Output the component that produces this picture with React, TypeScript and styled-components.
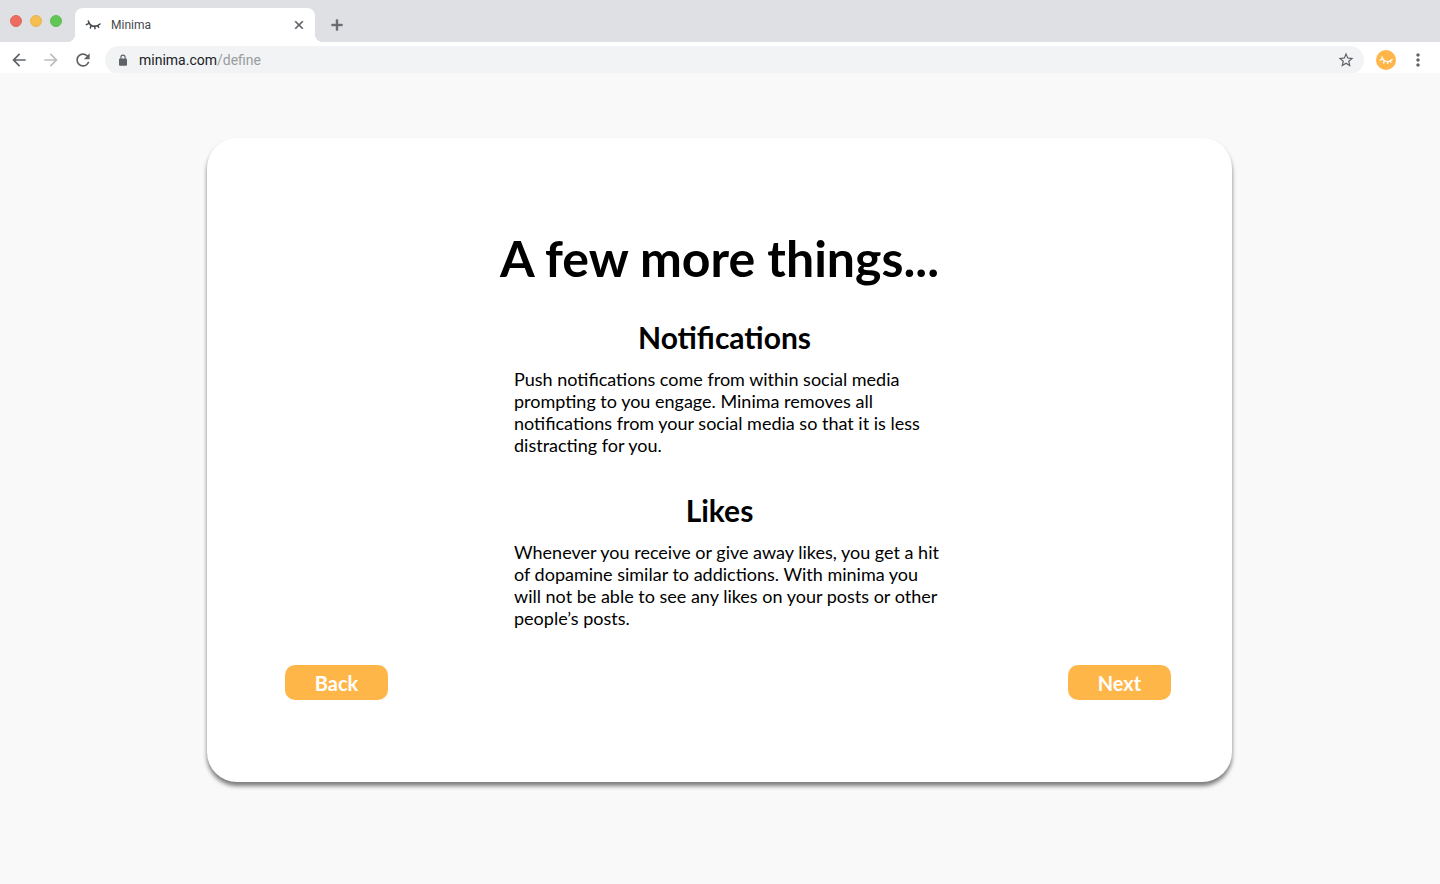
import React from "react";
import styled, { createGlobalStyle } from "styled-components";
import {
  MdAdd,
  MdArrowBack,
  MdArrowForward,
  MdClose,
  MdMoreVert,
  MdRefresh,
  MdStarBorder,
} from "react-icons/md";

const GlobalStyle = createGlobalStyle`
  *, *::before, *::after { box-sizing: border-box; }
  body {
    margin: 0;
    background: #f9f9f9;
    color: #000;
    font-family: Lato, sans-serif;
  }
  h1, h2, p { margin: 0; }
  button { font: inherit; border: 0; padding: 0; cursor: pointer; }
`;

const Browser = styled.header`
  font-family: Roboto, sans-serif;
`;

const TabStrip = styled.div`
  display: flex;
  align-items: flex-end;
  height: 42px;
  background: #dee0e4;
`;

const WindowControls = styled.div`
  display: flex;
  gap: 8px;
  padding: 0 13px 15px 10px;
`;

const WindowDot = styled.button<{ $fill: string; $edge: string }>`
  width: 12px;
  height: 12px;
  border-radius: 50%;
  background: ${(p) => p.$fill};
  border: 1px solid ${(p) => p.$edge};
`;

const Tab = styled.div`
  position: relative;
  display: flex;
  align-items: center;
  width: 240px;
  height: 34px;
  padding: 0 8px 0 10px;
  border-radius: 8px 8px 0 0;
  background: #fff;
  color: #45494d;
  font-size: 12px;
  line-height: 16px;

  &::before,
  &::after {
    content: "";
    position: absolute;
    bottom: 0;
    width: 8px;
    height: 8px;
  }
  &::before {
    right: 100%;
    background: radial-gradient(circle at 0 0, #dee0e4 8px, #fff 8px);
  }
  &::after {
    left: 100%;
    background: radial-gradient(circle at 100% 0, #dee0e4 8px, #fff 8px);
  }
`;

const TabTitle = styled.span`
  flex: 1;
  padding-left: 10px;
`;

const IconButton = styled.button<{ $size: number; $tone?: string }>`
  display: flex;
  align-items: center;
  justify-content: center;
  width: ${(p) => p.$size}px;
  height: ${(p) => p.$size}px;
  background: none;
  color: ${(p) => p.$tone ?? "#5f6368"};
`;

/* Outlines the glyph in its own colour for a heavier line. */
const BoldIconButton = styled(IconButton)`
  svg path:last-child {
    stroke: currentColor;
    stroke-width: 1;
  }
`;

const NewTab = styled(BoldIconButton)`
  margin: 0 0 7px 12px;
`;

const Toolbar = styled.nav`
  display: flex;
  align-items: flex-start;
  gap: 12px;
  height: 31px;
  padding: 4px 12px 0 9px;
  overflow: hidden;
  background: #fff;
`;

const ToolGroup = styled.div`
  display: flex;
  align-items: center;
  gap: 12px;
  height: 28px;
`;

const AddressBar = styled.div`
  flex: 1;
  display: flex;
  align-items: center;
  height: 28px;
  padding: 0 9px 0 12px;
  border-radius: 14px;
  background: #f1f3f4;
  color: #5f6368;
  font-size: 14px;
  line-height: 20px;
`;

const Address = styled.a`
  flex: 1;
  padding-left: 10px;
  color: #202124;
  text-decoration: none;
`;

const AddressPath = styled.span`
  color: #9a9c9e;
`;

const Page = styled.main`
  padding: 65px 208px 65px 207px;
`;

const Card = styled.section`
  display: flex;
  flex-direction: column;
  padding: 90px 61px 82px 78px;
  border-radius: 30px;
  background: #fff;
  box-shadow: 0 4px 4px rgba(0, 0, 0, 0.5);
`;

const Content = styled.div`
  align-self: center;
  width: 441px;
  margin-right: 17px;
`;

const Title = styled.h1`
  font-size: 50px;
  font-weight: 700;
  line-height: 60px;
  text-align: center;
  white-space: nowrap;
`;

const Topic = styled.section`
  padding-top: 31px;
`;

const TopicTitle = styled.h2<{ $overText?: boolean }>`
  padding-left: ${(p) => (p.$overText ? 10 : 0)}px;
  font-size: 30px;
  font-weight: 700;
  line-height: 36px;
  text-align: center;
`;

const TopicText = styled.p`
  padding: 13px 0 5px 15px;
  font-size: 18px;
  line-height: 22px;
`;

const Actions = styled.div`
  display: flex;
  justify-content: space-between;
  padding-top: 31px;
`;

const ActionButton = styled.button`
  width: 103px;
  height: 35px;
  padding-top: 1px;
  border-radius: 10px;
  background: #ffb649;
  color: #fff;
  font-size: 20px;
  font-weight: 700;
  line-height: 24px;
`;

const BadgeButton = styled(IconButton)`
  border-radius: 50%;
  background: #ffb649;
`;

/* Closed eye with lashes: the Minima mark. */
function MinimaMark({ width }: { width: number }) {
  return (
    <svg
      width={width}
      height={(width * 10) / 16}
      viewBox="0 0 48 30"
      fill="none"
      stroke="currentColor"
      strokeWidth="4.5"
      strokeLinecap="round"
      strokeLinejoin="round"
      aria-hidden="true"
    >
      <path d="M10 3 L13 10 Q19 20 29 19 Q38 19 45 12" />
      <path d="M4 14 L12 10" />
      <path d="M18 16 L16 24" />
      <path d="M29 19 L30 26" />
      <path d="M38 17 L41 22" />
    </svg>
  );
}

function LockIcon() {
  return (
    <svg width="12" height="12" viewBox="0 0 12 12" fill="none" aria-hidden="true">
      <rect x="2" y="4.5" width="8" height="7.2" rx="1" fill="currentColor" />
      <path d="M3.9 5 V3.2 a2.1 2.1 0 0 1 4.2 0 V5" stroke="currentColor" strokeWidth="1.1" />
    </svg>
  );
}

const topics = [
  {
    title: "Notifications",
    overText: true,
    text: "Push notifications come from within social media prompting to you engage. Minima removes all notifications from your social media so that it is less distracting for you.",
  },
  {
    title: "Likes",
    overText: false,
    text: "Whenever you receive or give away likes, you get a hit of dopamine similar to addictions. With minima you will not be able to see any likes on your posts or other people’s posts.",
  },
];

export default function App() {
  return (
    <>
      <GlobalStyle />
      <Browser>
        <TabStrip>
          <WindowControls>
            <WindowDot $fill="#ed6b60" $edge="#e2675c" aria-label="Close window" />
            <WindowDot $fill="#f5be4f" $edge="#e6b44e" aria-label="Minimize window" />
            <WindowDot $fill="#62c655" $edge="#5dbc52" aria-label="Zoom window" />
          </WindowControls>
          <Tab>
            <MinimaMark width={16} />
            <TabTitle>Minima</TabTitle>
            <BoldIconButton $size={16} aria-label="Close tab">
              <MdClose size={14} />
            </BoldIconButton>
          </Tab>
          <NewTab $size={20} aria-label="New tab">
            <MdAdd size={18} />
          </NewTab>
        </TabStrip>
        <Toolbar>
          <ToolGroup>
            <IconButton $size={20} aria-label="Back one page">
              <MdArrowBack size={20} />
            </IconButton>
            <IconButton $size={20} $tone="#bbbdbf" aria-label="Forward one page">
              <MdArrowForward size={20} />
            </IconButton>
            <IconButton $size={20} aria-label="Reload">
              <MdRefresh size={20} />
            </IconButton>
          </ToolGroup>
          <AddressBar>
            <LockIcon />
            <Address href="#define">
              minima.com<AddressPath>/define</AddressPath>
            </Address>
            <IconButton $size={18} aria-label="Bookmark this page">
              <MdStarBorder size={18} />
            </IconButton>
          </AddressBar>
          <ToolGroup>
            <BadgeButton $size={20} $tone="#fff" aria-label="Minima extension">
              <MinimaMark width={14} />
            </BadgeButton>
            <IconButton $size={20} aria-label="Menu">
              <MdMoreVert size={20} />
            </IconButton>
          </ToolGroup>
        </Toolbar>
      </Browser>
      <Page>
        <Card>
          <Content>
            <Title>A few more things...</Title>
            {topics.map((topic) => (
              <Topic key={topic.title}>
                <TopicTitle $overText={topic.overText}>{topic.title}</TopicTitle>
                <TopicText>{topic.text}</TopicText>
              </Topic>
            ))}
          </Content>
          <Actions>
            <ActionButton>Back</ActionButton>
            <ActionButton>Next</ActionButton>
          </Actions>
        </Card>
      </Page>
    </>
  );
}
